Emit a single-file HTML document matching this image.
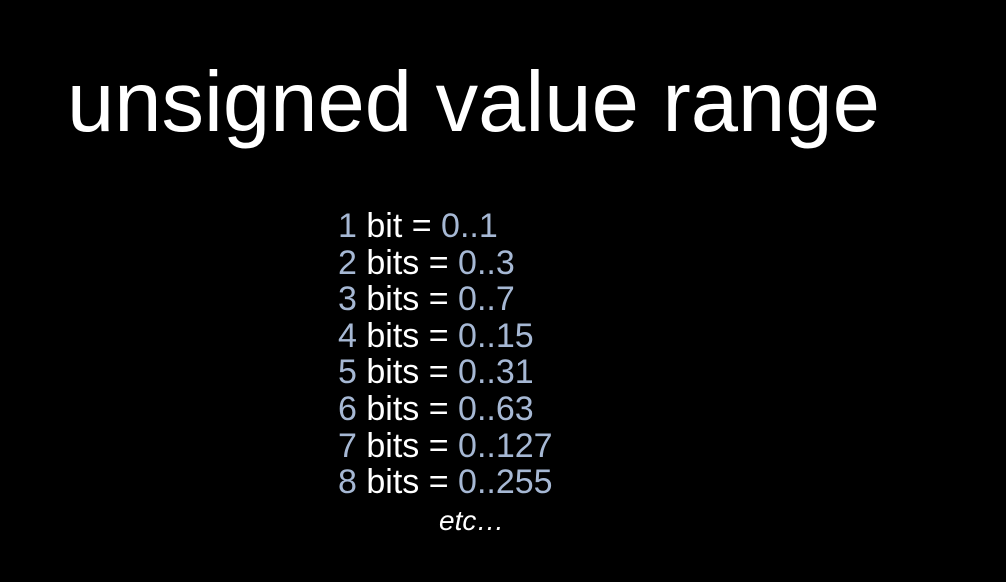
<!DOCTYPE html>
<html><head><meta charset="utf-8"><style>
html,body{margin:0;padding:0;background:#000;}
body{width:1006px;height:582px;position:relative;overflow:hidden;font-family:"Liberation Sans",sans-serif;}
.t{position:absolute;left:67px;top:60px;font-size:85px;line-height:85px;color:#fff;white-space:nowrap;}
.l{position:absolute;left:338px;top:208px;font-size:34px;line-height:36.6px;color:#fff;white-space:nowrap;}
.b{color:#a6b8d4;}
.e{position:absolute;left:439px;top:503px;font-size:28px;line-height:36px;color:#fff;font-style:italic;}
</style></head><body>
<div class="t">unsigned value range</div>
<div class="l">
<div><span class="b">1</span> bit = <span class="b">0..1</span></div>
<div><span class="b">2</span> bits = <span class="b">0..3</span></div>
<div><span class="b">3</span> bits = <span class="b">0..7</span></div>
<div><span class="b">4</span> bits = <span class="b">0..15</span></div>
<div><span class="b">5</span> bits = <span class="b">0..31</span></div>
<div><span class="b">6</span> bits = <span class="b">0..63</span></div>
<div><span class="b">7</span> bits = <span class="b">0..127</span></div>
<div><span class="b">8</span> bits = <span class="b">0..255</span></div>
</div>
<div class="e">etc…</div>
</body></html>
